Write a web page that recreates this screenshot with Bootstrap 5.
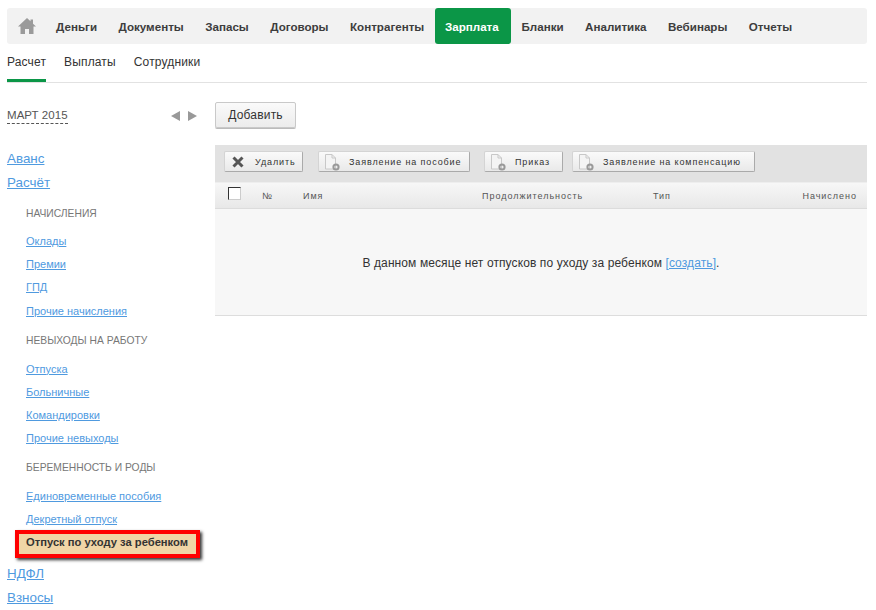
<!DOCTYPE html>
<html lang="ru"><head><meta charset="utf-8"><title>Зарплата</title>
<link href="https://cdn.jsdelivr.net/npm/bootstrap@5.3.0/dist/css/bootstrap.min.css" rel="stylesheet">
<style>
html,body{height:610px;overflow:hidden}
body{font-family:"Liberation Sans",Arial,sans-serif;font-size:12px;color:#333;background:#fff}
.page-wrap{padding:8px 9px 0 7px}
.top-menu{height:36px;background:#f2f2f2;border-radius:3px;padding-left:10px}
.home-ico{width:20px;height:18px;margin-right:8.35px}
.top-menu a{display:block;height:36px;line-height:37px;padding:0 10.75px;font-weight:700;font-size:11.6px;color:#3d3d3d;text-decoration:none}
.top-menu a.on{background:#0b9647;color:#fff;border-radius:3px;padding:0 12px 0 10px}
.sub-tabs{height:39px;border-bottom:1px solid #e2e2e2;gap:18px}
.sub-tabs a{display:block;height:38px;padding-top:10px;line-height:16px;color:#333;text-decoration:none;letter-spacing:.15px}
.sub-tabs a.on{border-bottom:3px solid #0b9647;height:38px}
.side-col{width:208px;flex:none}
.month-row{height:26px;margin-top:20px;padding-right:18px}
.month-name{font-size:11.5px;letter-spacing:.05px;color:#555;border-bottom:1px dashed #555;line-height:15px;height:16px}
.tri{width:9px;height:10px;fill:#999}
.side-list{margin:21px 0 0;padding:0;list-style:none}
.side-list a{color:#4f9adf}
.lv1{font-size:13.4px;height:24px;line-height:17px}
.lv2{font-size:11px;height:23.2px;line-height:15px;padding-left:19px}
.cap{font-size:10.3px;height:35px;padding:6px 0 0 19px;line-height:15px;color:#777}
.cap-first{height:36px;padding-top:8px}
.cap-last{margin-top:-.8px}
.mark-box{margin:-5.5px 0 7px 8px;width:185px;height:28px;border:4px solid #f00;background:#f0d5a6;font-size:11.2px;font-weight:700;line-height:17px;padding-left:7px;color:#333;box-shadow:2px 2px 3px #333}
.main-col{min-width:0}
.add-btn{margin-top:19px;width:81px;height:26px;border:1px solid #c9c9c9;border-radius:2px;background:linear-gradient(#fafafa,#ececec);font-size:12px;letter-spacing:.2px;color:#333;padding:0;box-shadow:0 1px 0 #bbb}
.tool-row{margin-top:17px;height:37px;background:#e2e2e2;padding:6px 0 0 9px}
.tool-btn{height:21px;border:1px solid #d4d4d4;border-right-color:#aaa;border-bottom-color:#aaa;border-radius:2px;background:linear-gradient(#fafafa,#e9e9e9);font-size:9px;letter-spacing:.88px;color:#333;padding:0;line-height:18px;flex:none}
.ico-x{width:12px;height:12px;margin-right:11px}
.ico-doc{width:18px;height:18px;margin-right:8px}
.head-row{height:27px;background:linear-gradient(#f7f7f7,#e8e8e8);border-top:1px solid #eee;border-bottom:1px solid #dcdcdc;font-size:9px;letter-spacing:.98px;color:#555}
.head-row>span{line-height:26px}
.chk{width:13px;height:13px;border:1px solid #333;border-right-color:#ccc;border-bottom-color:#ccc;background:#fff;margin:-4px 0 0 13px;flex:none}
.empty-box{height:107px;background:#f7f7f7;border-bottom:1px solid #ddd;padding-top:47px;line-height:15px;text-align:center;letter-spacing:.1px;color:#333}
.empty-box a{color:#4f9adf}
.w1{width:79px;margin-right:15px;padding-left:7px}
.w2{width:152px;margin-right:14px;padding-left:4px}
.w3{width:79px;margin-right:9px;padding-left:4px}
.w4{width:183px;padding-left:4px}
.hc1{width:41px;margin-left:21px}
.hc2{width:179px}
.hc3{width:171px}
.hc5{margin-left:auto;padding-right:10px}
</style></head>
<body>
<div class="page-wrap">
<nav class="top-menu d-flex align-items-center">
<svg class="home-ico" viewBox="0 0 20 18"><path fill="#9a9a9a" d="M10 1 1 9.5H3.5V17H8V12H12V17H16.5V9.5H19L16 6.7V2.5H13.5V4.3Z"/></svg>
<a href="#">Деньги</a><a href="#">Документы</a><a href="#">Запасы</a><a href="#">Договоры</a><a href="#">Контрагенты</a><a href="#" class="on">Зарплата</a><a href="#">Бланки</a><a href="#">Аналитика</a><a href="#">Вебинары</a><a href="#">Отчеты</a>
</nav>
<div class="sub-tabs d-flex">
<a href="#" class="on">Расчет</a><a href="#">Выплаты</a><a href="#">Сотрудники</a>
</div>
<div class="d-flex">
<aside class="side-col">
<div class="month-row d-flex align-items-center justify-content-between">
<span class="month-name">МАРТ 2015</span>
<span class="d-flex gap-2"><svg class="tri" viewBox="0 0 9 10"><path d="M9 0V10L0 5Z"/></svg><svg class="tri" viewBox="0 0 9 10"><path d="M0 0V10L9 5Z"/></svg></span>
</div>
<ul class="side-list">
<li class="lv1"><a href="#">Аванс</a></li>
<li class="lv1"><a href="#">Расчёт</a></li>
<li class="cap cap-first">НАЧИСЛЕНИЯ</li>
<li class="lv2"><a href="#">Оклады</a></li>
<li class="lv2"><a href="#">Премии</a></li>
<li class="lv2"><a href="#">ГПД</a></li>
<li class="lv2"><a href="#">Прочие начисления</a></li>
<li class="cap">НЕВЫХОДЫ НА РАБОТУ</li>
<li class="lv2"><a href="#">Отпуска</a></li>
<li class="lv2"><a href="#">Больничные</a></li>
<li class="lv2"><a href="#">Командировки</a></li>
<li class="lv2"><a href="#">Прочие невыходы</a></li>
<li class="cap cap-last">БЕРЕМЕННОСТЬ И РОДЫ</li>
<li class="lv2"><a href="#">Единовременные пособия</a></li>
<li class="lv2"><a href="#">Декретный отпуск</a></li>
<li class="mark-box">Отпуск по уходу за ребенком</li>
<li class="lv1"><a href="#">НДФЛ</a></li>
<li class="lv1"><a href="#">Взносы</a></li>
</ul>
</aside>
<main class="main-col flex-grow-1">
<button type="button" class="add-btn d-block">Добавить</button>
<div class="tool-row d-flex">
<button type="button" class="tool-btn w1 d-flex align-items-center"><svg class="ico-x" viewBox="0 0 12 12"><path d="M1.5 1.5 10.5 10.5M10.5 1.5 1.5 10.5" stroke="#555" stroke-width="3"/></svg>Удалить</button>
<button type="button" class="tool-btn w2 d-flex align-items-center"><svg class="ico-doc" viewBox="0 0 18 18"><path d="M2.5 1.5H9L12.5 5V16H2.5Z" fill="#f4f4f4" stroke="#c8c8c8"/><path d="M9 1.5V5H12.5" fill="none" stroke="#c8c8c8"/><circle cx="13" cy="14" r="2.6" fill="none" stroke="#999" stroke-width="2"/></svg>Заявление на пособие</button>
<button type="button" class="tool-btn w3 d-flex align-items-center"><svg class="ico-doc" viewBox="0 0 18 18"><path d="M2.5 1.5H9L12.5 5V16H2.5Z" fill="#f4f4f4" stroke="#c8c8c8"/><path d="M9 1.5V5H12.5" fill="none" stroke="#c8c8c8"/><circle cx="13" cy="14" r="2.6" fill="none" stroke="#999" stroke-width="2"/></svg>Приказ</button>
<button type="button" class="tool-btn w4 d-flex align-items-center"><svg class="ico-doc" viewBox="0 0 18 18"><path d="M2.5 1.5H9L12.5 5V16H2.5Z" fill="#f4f4f4" stroke="#c8c8c8"/><path d="M9 1.5V5H12.5" fill="none" stroke="#c8c8c8"/><circle cx="13" cy="14" r="2.6" fill="none" stroke="#999" stroke-width="2"/></svg>Заявление на компенсацию</button>
</div>
<div class="head-row d-flex align-items-center">
<span class="chk"></span>
<span class="hc1">№</span>
<span class="hc2">Имя</span>
<span class="hc3">Продолжительность</span>
<span>Тип</span>
<span class="hc5">Начислено</span>
</div>
<div class="empty-box">В данном месяце нет отпусков по уходу за ребенком <a href="#">[создать]</a>.</div>
</main>
</div>
</div>
</body></html>
